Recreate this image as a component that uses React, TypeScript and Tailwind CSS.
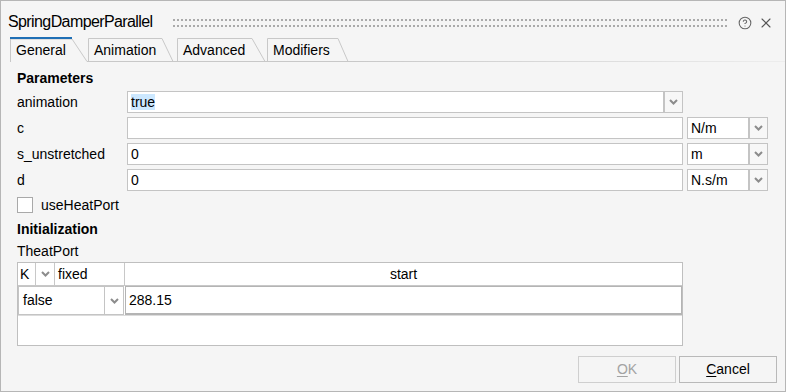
import { CircleHelp, X } from "lucide-react";

const Chevron = () => (
  <svg width="9" height="6" viewBox="0 0 9 6">
    <path d="M1 1 L4.5 4.5 L8 1" fill="none" stroke="#8c8c8c" strokeWidth="2" />
  </svg>
);

const DropButton = ({ className }: { className: string }) => (
  <div
    className={`flex items-center justify-center border border-[#c4c4c4] bg-[#f7f7f7] ${className}`}
  >
    <Chevron />
  </div>
);

const tabs = [
  { label: "General", width: "w-[78px]", w: 78, tr: 62, br: 77, active: true },
  { label: "Animation", width: "w-[89px]", w: 89, tr: 74, br: 85, active: false },
  { label: "Advanced", width: "w-[90px]", w: 90, tr: 75, br: 88, active: false },
  { label: "Modifiers", width: "w-[82px]", w: 82, tr: 71, br: 81, active: false },
];

const rows = [
  { name: "c", value: "", unit: "N/m" },
  { name: "s_unstretched", value: "0", unit: "m" },
  { name: "d", value: "0", unit: "N.s/m" },
];

export default function App() {
  return (
    <div className="flex h-[392px] w-[786px] flex-col border border-[#b6b6b6] bg-[#f5f5f5] font-['Liberation_Sans',Arial,sans-serif] text-[14px] text-black">
      {/* title bar */}
      <div className="flex h-[36px] items-start pl-[7px] pr-[11px] pt-[11px]">
        <span className="text-[16px] leading-[20px] tracking-[-0.6px]">
          SpringDamperParallel
        </span>
        <svg className="ml-[20px] mr-[11px] mt-[7px] h-[8px] flex-1">
          <defs>
            <pattern id="grip" width="4" height="8" patternUnits="userSpaceOnUse">
              <rect x="0" y="0" width="2" height="2" fill="#aaaaaa" />
              <rect x="0" y="6" width="2" height="2" fill="#aaaaaa" />
            </pattern>
          </defs>
          <rect x="0" y="0" width="100%" height="8" fill="url(#grip)" />
        </svg>
        <div className="mt-[3px] flex items-center gap-[6px]">
          <CircleHelp size={14} strokeWidth={1.8} color="#666" />
          <X size={16} strokeWidth={1.6} color="#555" />
        </div>
      </div>

      {/* tabs */}
      <div className="flex h-[25px] pl-[9px]">
        {tabs.map((t) => (
          <div key={t.label} className={`relative flex h-[25px] items-center pl-[6px] ${t.width}`}>
            <svg className="absolute inset-0" width={t.w} height={25}>
              <path
                d={`M0.5 25 V${t.active ? 2 : 1.5} H${t.tr} L${t.br} 24.5`}
                fill="#f5f5f5"
                stroke="#c8c8c8"
              />
              {t.active ? (
                <>
                  <rect x="0" y="0" width={t.tr} height="2" fill="#1f6fb5" />
                  <line x1={t.br} y1="24.5" x2={t.w} y2="24.5" stroke="#c8c8c8" />
                </>
              ) : (
                <line x1="0" y1="24.5" x2={t.w} y2="24.5" stroke="#c8c8c8" />
              )}
            </svg>
            <span className="relative mt-[2px]">{t.label}</span>
          </div>
        ))}
        <div className="flex flex-1 flex-col justify-end">
          <div className="h-px bg-gradient-to-r from-[#c8c8c8] to-[#ededed]" />
        </div>
      </div>

      {/* content */}
      <div className="flex flex-1 flex-col pl-[16px] pr-[8px] pb-[8px]">
        <div className="mt-[8px] h-[16px] font-bold leading-[16px]">Parameters</div>

        <div className="mt-[5px] flex h-[22px] items-center">
          <span className="w-[110px]">animation</span>
          <div className="flex h-[22px] w-[537px] items-center border border-[#c4c4c4] bg-white pl-[3px]">
            <span className="bg-[#cce8ff] leading-[16px]">true</span>
          </div>
          <DropButton className="h-[22px] w-[19px]" />
        </div>

        {rows.map((r) => (
          <div key={r.name} className="mt-[4px] flex h-[22px] items-center">
            <span className="w-[110px]">{r.name}</span>
            <div className="flex h-[22px] w-[556px] items-center border border-[#c4c4c4] bg-white pl-[3px]">
              {r.value}
            </div>
            <div className="ml-[4px] flex h-[22px] w-[62px] items-center border border-[#c4c4c4] bg-white pl-[3px]">
              {r.unit}
            </div>
            <DropButton className="h-[22px] w-[19px]" />
          </div>
        ))}

        <div className="mt-[6px] flex h-[16px] items-center">
          <div className="h-[16px] w-[16px] border border-[#a9a9a9] bg-white" />
          <span className="ml-[8px]">useHeatPort</span>
        </div>

        <div className="mt-[8px] h-[16px] font-bold leading-[16px]">Initialization</div>
        <div className="mt-[6px] h-[16px] leading-[16px]">TheatPort</div>

        {/* table */}
        <div className="mt-[3px] flex h-[84px] w-[666px] flex-col border border-[#bfbfbf] bg-white">
          <div className="flex h-[23px] border-b border-[#c8c8c8]">
            <div className="flex w-[18px] items-center border-r border-[#c8c8c8] pl-[2px]">K</div>
            <div className="flex w-[19px] items-center justify-center border-r border-[#c8c8c8]">
              <Chevron />
            </div>
            <div className="flex w-[70px] items-center border-r border-[#c8c8c8] pl-[3px]">fixed</div>
            <div className="flex flex-1 items-center justify-center">start</div>
          </div>
          <div className="flex h-[30px] border-b border-[#dcdcdc]">
            <div className="flex w-[87px] items-center border border-[#c4c4c4] pl-[4px]">false</div>
            <div className="flex w-[19px] items-center justify-center border-y border-r border-[#c4c4c4]">
              <Chevron />
            </div>
            <div className="ml-[1px] flex flex-1 items-center border-x border-t border-b-2 border-[#b4b4b4] pl-[3px]">
              288.15
            </div>
          </div>
        </div>

        {/* buttons */}
        <div className="mt-auto flex justify-end gap-[3px]">
          <button className="h-[27px] w-[98px] border border-[#cfcfcf] bg-[#f5f5f5] text-[#a3a3a3]">
            <span className="underline underline-offset-2">O</span>K
          </button>
          <button className="h-[27px] w-[98px] border border-[#b9b9b9] bg-[#f5f5f5]">
            <span className="underline underline-offset-2">C</span>ancel
          </button>
        </div>
      </div>
    </div>
  );
}
